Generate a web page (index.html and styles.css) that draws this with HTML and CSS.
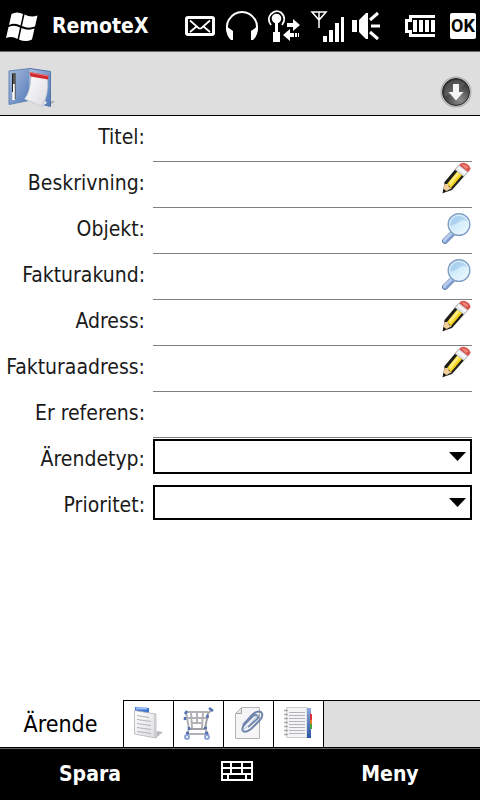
FILE: index.html
```html
<!DOCTYPE html>
<html lang="sv">
<head>
<meta charset="utf-8">
<meta name="viewport" content="width=device-width, initial-scale=1">
<title>RemoteX</title>
<link rel="stylesheet" href="styles.css">
</head>
<body>
<svg class="defs" aria-hidden="true">
  <defs>
    <linearGradient id="lens" x1="0" y1="0" x2="1" y2="1">
      <stop offset="0" stop-color="#a9cdee"/><stop offset=".45" stop-color="#d3ecfb"/><stop offset="1" stop-color="#f2fdff"/>
    </linearGradient>
    <linearGradient id="cover" x1="0" y1="0" x2="1" y2="1">
      <stop offset="0" stop-color="#a9bddb"/><stop offset="1" stop-color="#5078b8"/>
    </linearGradient>
    <linearGradient id="paper" x1="0" y1="0" x2="1" y2="1">
      <stop offset="0" stop-color="#ffffff"/><stop offset="1" stop-color="#dcdce2"/>
    </linearGradient>
    <linearGradient id="blue" x1="0" y1="0" x2="0" y2="1">
      <stop offset="0" stop-color="#8fa9d8"/><stop offset="1" stop-color="#2c55a5"/>
    </linearGradient>
    <radialGradient id="dark" cx=".65" cy=".8" r=".8">
      <stop offset="0" stop-color="#8c8c8c"/><stop offset=".6" stop-color="#4a4a4a"/><stop offset="1" stop-color="#303030"/>
    </radialGradient>
    <symbol id="pencil" viewBox="0 0 30 34">
      <path d="M2 31 3.500 20 17 4 26 11 11 28z" fill="#1d1d1b"/>
      <path d="M6 22 17.500 8 22 12 10 26z" fill="#f6d21f"/>
      <path d="M8 20 18 8 20 10 9 24z" fill="#ffec7c"/>
      <path d="M3.500 22 7 22 8 25 11 26 2 31z" fill="#f3cf9c"/>
      <path d="M2.500 27 5.500 29 1.500 31.500z" fill="#111"/>
      <path d="M14 7.500 18 3 27 10 23 14.500z" fill="#e9ebee" stroke="#a4a8ad" stroke-width=".7"/>
      <path d="M17 5.500 24.500 11.500" stroke="#fff" stroke-width="1.500"/>
      <path d="M18 3Q20.500 0 24 1 28.500 2.500 29.500 6.500 29 8.500 27 10z" fill="#d7544d"/>
      <path d="M20.500 2.500Q24 1.500 27.500 5.500L25 7z" fill="#f0867a"/>
    </symbol>
    <symbol id="magnifier" viewBox="0 0 30 34">
      <path d="M4 29 12 21" stroke="#6480b0" stroke-width="6" stroke-linecap="round"/>
      <path d="M4 28.500 11.500 21" stroke="#b7cdee" stroke-width="4" stroke-linecap="round"/>
      <path d="M5 30 12 23" stroke="#7f9fd2" stroke-width="2"/>
      <circle cx="18" cy="12.500" r="10.800" fill="url(#lens)" stroke="#7f9fc4" stroke-width="1.400"/>
      <path d="M9 13Q13 14 18 10T27 10Q24 4 18 4T9 13" fill="#8dbfe8" opacity=".5"/>
      <circle cx="18" cy="12.500" r="9.500" fill="none" stroke="#e4f2fc" stroke-width=".8"/>
    </symbol>
  </defs>
</svg>

<div class="screen">
  <header class="status">
    <svg class="flag" width="34" height="32" viewBox="0 0 34 32" aria-hidden="true">
      <path d="M5.500 4Q11 1 17 4L14.500 15.500Q9 12.500 3 15z" fill="#fff"/>
      <path d="M18.500 4.500Q25 8 31.500 5.500L29 16.500Q22.500 19 16 16z" fill="#fff"/>
      <path d="M2.500 17Q8.500 14.500 14 17.500L11.500 29Q6 25.500 0 28z" fill="#fff"/>
      <path d="M15.500 18Q22 21 28.500 18.500L26 29.500Q19.500 32.500 13 29.500z" fill="#fff"/>
    </svg>
    <h1 class="app-name">RemoteX</h1>
    <div class="indicators" aria-hidden="true">
      <svg width="32" height="52" viewBox="184 0 32 52" fill="none" stroke="#fff">
        <rect x="186.500" y="17.500" width="27" height="17" rx="1.500" stroke-width="3"/>
        <path d="M190 20.500 199 28.500H201L210 20.500M190 32 196.500 26.500M210 32 203.500 26.500" stroke-width="1.700"/>
      </svg>
      <svg width="32" height="52" viewBox="226 0 32 52">
        <path d="M228 33Q225.500 25 229 19.500 234 12 242 12T255 19.500Q258.500 25 256 33" fill="none" stroke="#fff" stroke-width="2"/>
        <path d="M226 26 233 31V40H231Q226 36 226 26M258 26 251 31V40H253Q258 36 258 26" fill="#fff"/>
      </svg>
      <svg width="32" height="52" viewBox="268 0 32 52">
        <path d="M271 25Q266.500 19 271 14 276 9 281 12.500 287 18 282 25" fill="none" stroke="#fff" stroke-width="1.800"/>
        <circle cx="276.500" cy="18.500" r="4.800" fill="#fff"/>
        <path d="M275 22H278V32H280V42H273V32H275zM287 23H293V19L300 25 293 31V27H287zM283 35 290 29V33H294V37H290V41zM295 33H297V37H295zM298 33H299V37H298z" fill="#fff"/>
      </svg>
      <svg width="32" height="52" viewBox="310 0 32 52">
        <path d="M312 12H326L319 20zM319 12V28" fill="none" stroke="#fff" stroke-width="1.500"/>
        <path d="M323 36H327V42H323zM329 30H333V42H329zM335 23H339V42H335zM341 17H344V42H341z" fill="#fff"/>
      </svg>
      <svg width="32" height="52" viewBox="352 0 32 52">
        <path d="M352 20H357V32H352zM359 20 366 13H368V39H366L359 32z" fill="#fff"/>
        <path d="M370 20 378 13M371 26H380M370 32 378 39" stroke="#fff" stroke-width="3"/>
      </svg>
      <svg width="46" height="52" viewBox="394 0 46 52">
        <path d="M435 16.500H410.500V20.500H406.500V31.500H410.500V35.500H435" fill="none" stroke="#fff" stroke-width="3"/>
        <path d="M413 20H417V32H413zM419 20H423V32H419zM425 20H429V32H425zM431 20H435V32H431z" fill="#fff"/>
      </svg>
    </div>
    <button class="ok" type="button">OK</button>
  </header>

  <div class="toolbar">
    <svg width="48" height="44" viewBox="0 0 48 44" aria-hidden="true">
      <path d="M40 42 47 36 42 36z" fill="#888" opacity=".6"/>
      <path d="M1 6 22 3.500 23 35 1 39.500z" fill="url(#cover)" stroke="#6485b5"/>
      <path d="M22 3.500 42.500 6.500V41.500L22 36z" fill="url(#cover)" stroke="#5275ab"/>
      <path d="M22 4V35" stroke="#d3deef"/>
      <path d="M6 8V34" stroke="#555" stroke-width="3.500"/>
      <path d="M5.500 19V35" stroke="#fff" stroke-width="2.500"/>
      <path d="M4.500 9V27" stroke="#222" stroke-width="1"/>
      <path d="M23 10 39.500 13Q41 31 34 41.500L16.500 34Q23 26 23 10z" fill="url(#paper)" stroke="#b6bac4" stroke-width=".5"/>
      <path d="M34 41 36.500 35 39 38" fill="#e8ebf2" stroke="#a9b5cb" stroke-width=".7"/>
      <path d="M21.500 7 40.500 10.500 40 14.500 22.500 11.500z" fill="#cf2a30"/>
      <path d="M22 7.500 40 11" stroke="#ed777a"/>
    </svg>
    <button class="round" type="button" aria-label="Visa mer">
      <svg width="32" height="32" viewBox="0 0 32 32" aria-hidden="true">
        <circle cx="16" cy="16" r="15.500" fill="#a9a9ab"/>
        <circle cx="16" cy="16" r="14.500" fill="#d0d0d3"/>
        <circle cx="16" cy="16" r="13.500" fill="url(#dark)" stroke="#292929"/>
        <path d="M4.500 20Q15 19 25 8 17 0 8 7 3 12 4.500 20" fill="#fff" opacity=".12"/>
        <path d="M13 8H19V16H23.500L16 24.500 8.500 16H13z" fill="#f5f5f5"/>
      </svg>
    </button>
  </div>

  <main class="content">
    <form id="order" class="form">
      <div class="row">
        <label for="titel">Titel:</label>
        <div class="field"><input id="titel" type="text"></div>
      </div>
      <div class="row">
        <label for="beskrivning">Beskrivning:</label>
        <div class="field"><input id="beskrivning" type="text"><button class="edit" type="button" aria-label="Redigera beskrivning"><svg><use href="#pencil"/></svg></button></div>
      </div>
      <div class="row">
        <label for="objekt">Objekt:</label>
        <div class="field"><input id="objekt" type="text"><button class="search" type="button" aria-label="Sök objekt"><svg><use href="#magnifier"/></svg></button></div>
      </div>
      <div class="row">
        <label for="kund">Fakturakund:</label>
        <div class="field"><input id="kund" type="text"><button class="search" type="button" aria-label="Sök fakturakund"><svg><use href="#magnifier"/></svg></button></div>
      </div>
      <div class="row">
        <label for="adress">Adress:</label>
        <div class="field"><input id="adress" type="text"><button class="edit" type="button" aria-label="Redigera adress"><svg><use href="#pencil"/></svg></button></div>
      </div>
      <div class="row">
        <label for="fakturaadress">Fakturaadress:</label>
        <div class="field"><input id="fakturaadress" type="text"><button class="edit" type="button" aria-label="Redigera fakturaadress"><svg><use href="#pencil"/></svg></button></div>
      </div>
      <div class="row">
        <label for="referens">Er referens:</label>
        <div class="field"><input id="referens" type="text"></div>
      </div>
      <div class="row">
        <label for="typ">Ärendetyp:</label>
        <div class="choice"><select id="typ"><option></option></select></div>
      </div>
      <div class="row">
        <label for="prioritet">Prioritet:</label>
        <div class="choice"><select id="prioritet"><option></option></select></div>
      </div>
    </form>
  </main>

  <nav class="tabs">
    <button class="tab current" type="button">Ärende</button>
    <button class="tab" type="button" aria-label="Anteckningar">
      <svg width="32" height="36" viewBox="0 0 32 36" aria-hidden="true">
        <path d="M23 32 30 26 24 25z" fill="#777" opacity=".5"/>
        <path d="M2 1 16 2V8L2 6z" fill="#3f74cf"/><path d="M3 2.500H14" stroke="#9cc3f8" stroke-width="2"/>
        <path d="M1.500 4.500 23 8V32L1.500 28z" fill="url(#paper)" stroke="#b0b0b5" stroke-width=".8"/>
        <path d="M21.500 8V31.500" stroke="#ccc"/>
        <path d="M4 9.500 16 11.500M4 13.500 18 15.500M4 17.500 18 19.500M4 21.500 18 23.500M4 25.500 18 27.500" stroke="#b2b2b8" stroke-width="1.200"/>
      </svg>
    </button>
    <button class="tab" type="button" aria-label="Varukorg">
      <svg width="32" height="36" viewBox="0 0 32 36" aria-hidden="true" fill="none">
        <path d="M29 4 25 7 22 23H7" stroke="#a2a2a6" stroke-width="2"/>
        <path d="M3 6H25M3 12H24M9 17H20M3 6 6 23M8 6 9 22M14 6V17M20 6 19 22M6 23 4 28M22 23 25 28M4 28H26" stroke="#b2b2b6" stroke-width="2"/>
        <circle cx="4" cy="31" r="2" stroke="#8ea3d8" stroke-width="2"/><circle cx="24" cy="31" r="2" stroke="#8ea3d8" stroke-width="2"/>
        <path d="M26 2 30 5M2 11V14M24 9 25 12M2 8 4 5M6 24V21M21 22H24M3 27H6M22 27H25" stroke="#5470b5" stroke-width="2.500"/>
      </svg>
    </button>
    <button class="tab" type="button" aria-label="Bilagor">
      <svg width="32" height="36" viewBox="0 0 32 36" aria-hidden="true">
        <path d="M8.500 1.500H26.500V32.500H2.500V7.500z" fill="#f5f5f7" stroke="#b4b4b4"/><path d="M8.500 2V7.500H3" fill="#e3e3e5" stroke="#aaa"/>
        <path d="M10 19 19 9Q24 4 28 6 31 9 27 14L18 23Q13 27 10 25 8 22 12 18L20 10Q23 8 25 10 26 12 23 14L15 21" fill="none" stroke="#7186ad" stroke-width="2"/>
        <path d="M11 23 15 20 25 9" fill="none" stroke="#afbed7" stroke-width="1"/>
      </svg>
    </button>
    <button class="tab" type="button" aria-label="Register">
      <svg width="32" height="36" viewBox="0 0 32 36" aria-hidden="true">
        <path d="M3.500 1.500H24V31.500H3.500z" fill="#f4f4f6" stroke="#ccc"/>
        <path d="M6 6.500H22M6 9.500H22M6 12.500H22M6 15.500H22M6 18.500H22M6 21.500H22M6 24.500H22M6 27.500H22" stroke="#b4b4ba"/>
        <path d="M1 4.500H5M1 8.500H5M1 12.500H5M1 16.500H5M1 20.500H5M1 24.500H5M1 28.500H5" stroke="#aaa" stroke-width="1.500"/>
        <path d="M24 2H28V32H24z" fill="url(#blue)"/>
        <path d="M27 8H29V14H27z" fill="#d93232"/><path d="M27 14H29V18H27z" fill="#e77b2c"/><path d="M27 18H29V23H27z" fill="#46a23e"/>
      </svg>
    </button>
  </nav>

  <footer class="softkeys">
    <button type="submit" form="order">Spara</button>
    <button class="keyboard" type="button" aria-label="Tangentbord">
      <svg width="32" height="20" viewBox="0 0 32 20" fill="none" stroke="#fff" stroke-width="2" shape-rendering="crispEdges" aria-hidden="true">
        <path d="M1 1H31V19H1zM1 7H31M1 13H31M10 1V13M21 1V13M7 13V19M25 13V19"/>
      </svg>
    </button>
    <button type="button">Meny</button>
  </footer>
</div>
</body>
</html>
```
FILE: styles.css
```css
* {
  box-sizing: border-box;
}

body {
  margin: 0;
  background: #fff;
  color: #1a1a1a;
  font-family: "DejaVu Sans Condensed", "Noto Sans", sans-serif;
  font-size: 21px;
}

button,
input,
select {
  margin: 0;
  padding: 0;
  border: 0;
  border-radius: 0;
  background: none;
  color: inherit;
  font: inherit;
}

svg {
  display: block;
  flex: none;
  overflow: visible;
}

.defs {
  position: absolute;
  width: 0;
  height: 0;
}

.screen {
  display: flex;
  flex-direction: column;
  min-height: 100vh;
}

.status {
  display: flex;
  align-items: center;
  height: 52px;
  padding: 0 4px 0 6px;
  border-bottom: 1px solid #666;
  background: #000;
  color: #fff;
}

.app-name {
  flex: 1;
  margin: 0 0 0 12px;
  font-size: 21px;
  font-weight: 700;
}

.indicators {
  display: flex;
  gap: 10px;
  margin-right: 10px;
}

.ok {
  width: 26px;
  height: 26px;
  border-radius: 2px;
  background: #fff;
  color: #000;
  font-family: Roboto, sans-serif;
  font-size: 18px;
  font-weight: 700;
  line-height: 26px;
}

.toolbar {
  display: flex;
  align-items: center;
  justify-content: space-between;
  height: 64px;
  padding: 6px 8px 0;
  border-bottom: 1px solid #000;
  background: #dedede;
}

.round {
  margin-top: 10px;
}

.content {
  flex: 1;
}

.form {
  padding-right: 8px;
}

.row {
  display: grid;
  grid-template-columns: 145px minmax(0, 1fr);
  gap: 8px;
  height: 46px;
}

.row label {
  line-height: 42px;
  text-align: right;
  white-space: nowrap;
}

.field {
  display: flex;
  border-bottom: 1px solid #808080;
}

.field input {
  flex: 1;
  min-width: 0;
  outline: 0;
}

.field button {
  display: flex;
  align-items: flex-start;
  padding: 0 1px;
}

.field .search {
  padding-top: 4px;
}

.field svg {
  width: 30px;
  height: 34px;
}

.choice {
  position: relative;
  padding-top: 1px;
}

.choice select {
  display: block;
  width: 100%;
  height: 35px;
  padding: 0 28px 0 8px;
  border: 2px solid #000;
  appearance: none;
}

.choice::after {
  position: absolute;
  top: 14px;
  right: 6px;
  width: 17px;
  height: 9px;
  background: #000;
  clip-path: polygon(0 0, 100% 0, 50% 100%);
  content: "";
  pointer-events: none;
}

.tabs {
  display: flex;
  height: 47px;
  background: linear-gradient(#000 1px, #dedede 1px);
}

.tab {
  display: flex;
  align-items: center;
  justify-content: center;
  width: 50px;
  border-top: 1px solid #000;
  border-left: 1px solid #000;
  background: #fff;
}

.tab:last-child {
  width: 51px;
  border-right: 1px solid #000;
}

.tab.current {
  width: 123px;
  padding-right: 2px;
  border: 0;
  color: #000;
  font-size: 23px;
}

.softkeys {
  display: grid;
  grid-template-columns: 3fr 2fr 3fr;
  height: 53px;
  border-top: 1px solid #000;
  background: linear-gradient(#666 1px, #000 1px);
  color: #fff;
}

.softkeys button {
  font-size: 21px;
  font-weight: 700;
}

.softkeys .keyboard {
  display: flex;
  justify-content: center;
  padding: 13px 6px 0 0;
}
```
